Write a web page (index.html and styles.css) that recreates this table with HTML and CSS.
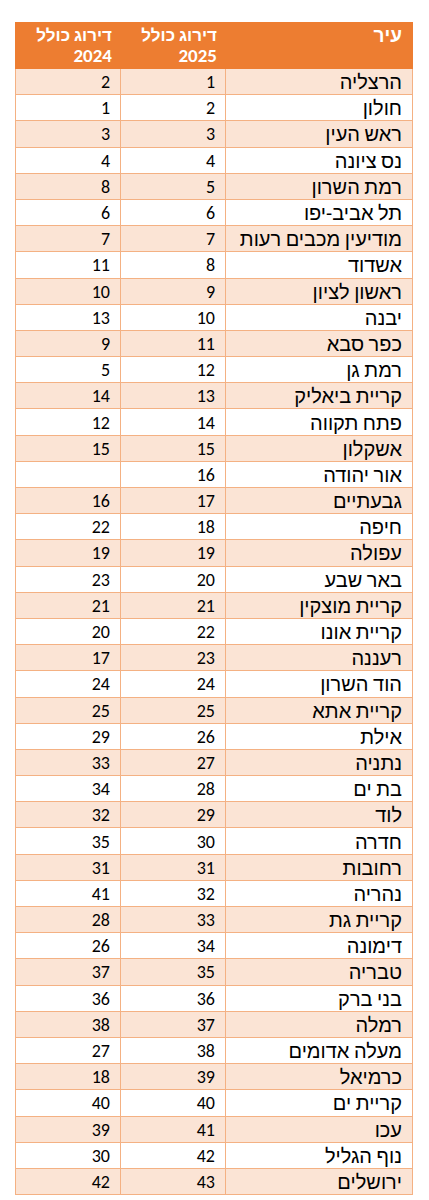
FILE: index.html
```html
<!DOCTYPE html>
<html lang="he" dir="rtl">
<head>
<meta charset="utf-8">
<link rel="stylesheet" href="styles.css">
</head>
<body>
<table class="rank">
<thead>
<tr><th class="city">עיר</th><th>דירוג כולל<br><span class="yr">2025</span></th><th>דירוג כולל<br><span class="yr">2024</span></th></tr>
</thead>
<tbody>
<tr><td class="city">הרצליה</td><td>1</td><td>2</td></tr>
<tr><td class="city">חולון</td><td>2</td><td>1</td></tr>
<tr><td class="city">ראש העין</td><td>3</td><td>3</td></tr>
<tr><td class="city">נס ציונה</td><td>4</td><td>4</td></tr>
<tr><td class="city">רמת השרון</td><td>5</td><td>8</td></tr>
<tr><td class="city">תל אביב-יפו</td><td>6</td><td>6</td></tr>
<tr><td class="city">מודיעין מכבים רעות</td><td>7</td><td>7</td></tr>
<tr><td class="city">אשדוד</td><td>8</td><td>11</td></tr>
<tr><td class="city">ראשון לציון</td><td>9</td><td>10</td></tr>
<tr><td class="city">יבנה</td><td>10</td><td>13</td></tr>
<tr><td class="city">כפר סבא</td><td>11</td><td>9</td></tr>
<tr><td class="city">רמת גן</td><td>12</td><td>5</td></tr>
<tr><td class="city">קריית ביאליק</td><td>13</td><td>14</td></tr>
<tr><td class="city">פתח תקווה</td><td>14</td><td>12</td></tr>
<tr><td class="city">אשקלון</td><td>15</td><td>15</td></tr>
<tr><td class="city">אור יהודה</td><td>16</td><td></td></tr>
<tr><td class="city">גבעתיים</td><td>17</td><td>16</td></tr>
<tr><td class="city">חיפה</td><td>18</td><td>22</td></tr>
<tr><td class="city">עפולה</td><td>19</td><td>19</td></tr>
<tr><td class="city">באר שבע</td><td>20</td><td>23</td></tr>
<tr><td class="city">קריית מוצקין</td><td>21</td><td>21</td></tr>
<tr><td class="city">קריית אונו</td><td>22</td><td>20</td></tr>
<tr><td class="city">רעננה</td><td>23</td><td>17</td></tr>
<tr><td class="city">הוד השרון</td><td>24</td><td>24</td></tr>
<tr><td class="city">קריית אתא</td><td>25</td><td>25</td></tr>
<tr><td class="city">אילת</td><td>26</td><td>29</td></tr>
<tr><td class="city">נתניה</td><td>27</td><td>33</td></tr>
<tr><td class="city">בת ים</td><td>28</td><td>34</td></tr>
<tr><td class="city">לוד</td><td>29</td><td>32</td></tr>
<tr><td class="city">חדרה</td><td>30</td><td>35</td></tr>
<tr><td class="city">רחובות</td><td>31</td><td>31</td></tr>
<tr><td class="city">נהריה</td><td>32</td><td>41</td></tr>
<tr><td class="city">קריית גת</td><td>33</td><td>28</td></tr>
<tr><td class="city">דימונה</td><td>34</td><td>26</td></tr>
<tr><td class="city">טבריה</td><td>35</td><td>37</td></tr>
<tr><td class="city">בני ברק</td><td>36</td><td>36</td></tr>
<tr><td class="city">רמלה</td><td>37</td><td>38</td></tr>
<tr><td class="city">מעלה אדומים</td><td>38</td><td>27</td></tr>
<tr><td class="city">כרמיאל</td><td>39</td><td>18</td></tr>
<tr><td class="city">קריית ים</td><td>40</td><td>40</td></tr>
<tr><td class="city">עכו</td><td>41</td><td>39</td></tr>
<tr><td class="city">נוף הגליל</td><td>42</td><td>30</td></tr>
<tr><td class="city">ירושלים</td><td>43</td><td>42</td></tr>
</tbody>
</table>
</body>
</html>
```
FILE: styles.css
```css
html, body {
  margin: 0;
  padding: 0;
  background: #ffffff;
}
body {
  padding: 22px 16px 0 16px;
  font-family: Carlito, "Liberation Sans", "DejaVu Sans", sans-serif;
}
.rank {
  width: 397px;
  border-collapse: collapse;
  table-layout: fixed;
  font-size: 18px;
  color: #000000;
}
.rank th {
  background: #ED7D31;
  color: #ffffff;
  font-weight: bold;
  font-size: 17px;
  text-align: right;
  vertical-align: top;
  white-space: nowrap;
  height: 46px;
  padding: 3px 8px 0 8px;
  line-height: 20px;
  box-sizing: border-box;
  width: 105px;
  border: 1px solid #ED7D31;
}
.rank th .yr {
  font-size: 19px;
}
.rank th.city {
  width: 187px;
  font-size: 19px;
  padding-right: 10px;
}
.rank td {
  height: 26.2px;
  padding: 1px 10px 0 10px;
  box-sizing: border-box;
  text-align: right;
  vertical-align: middle;
  line-height: 24px;
  white-space: nowrap;
  border: 1px solid #F4B183;
}
.rank td.city {
  font-size: 20px;
}
.rank tbody tr:nth-child(odd) td {
  background: #FBE4D5;
}
.rank tbody tr:nth-child(even) td {
  background: #ffffff;
}
```
